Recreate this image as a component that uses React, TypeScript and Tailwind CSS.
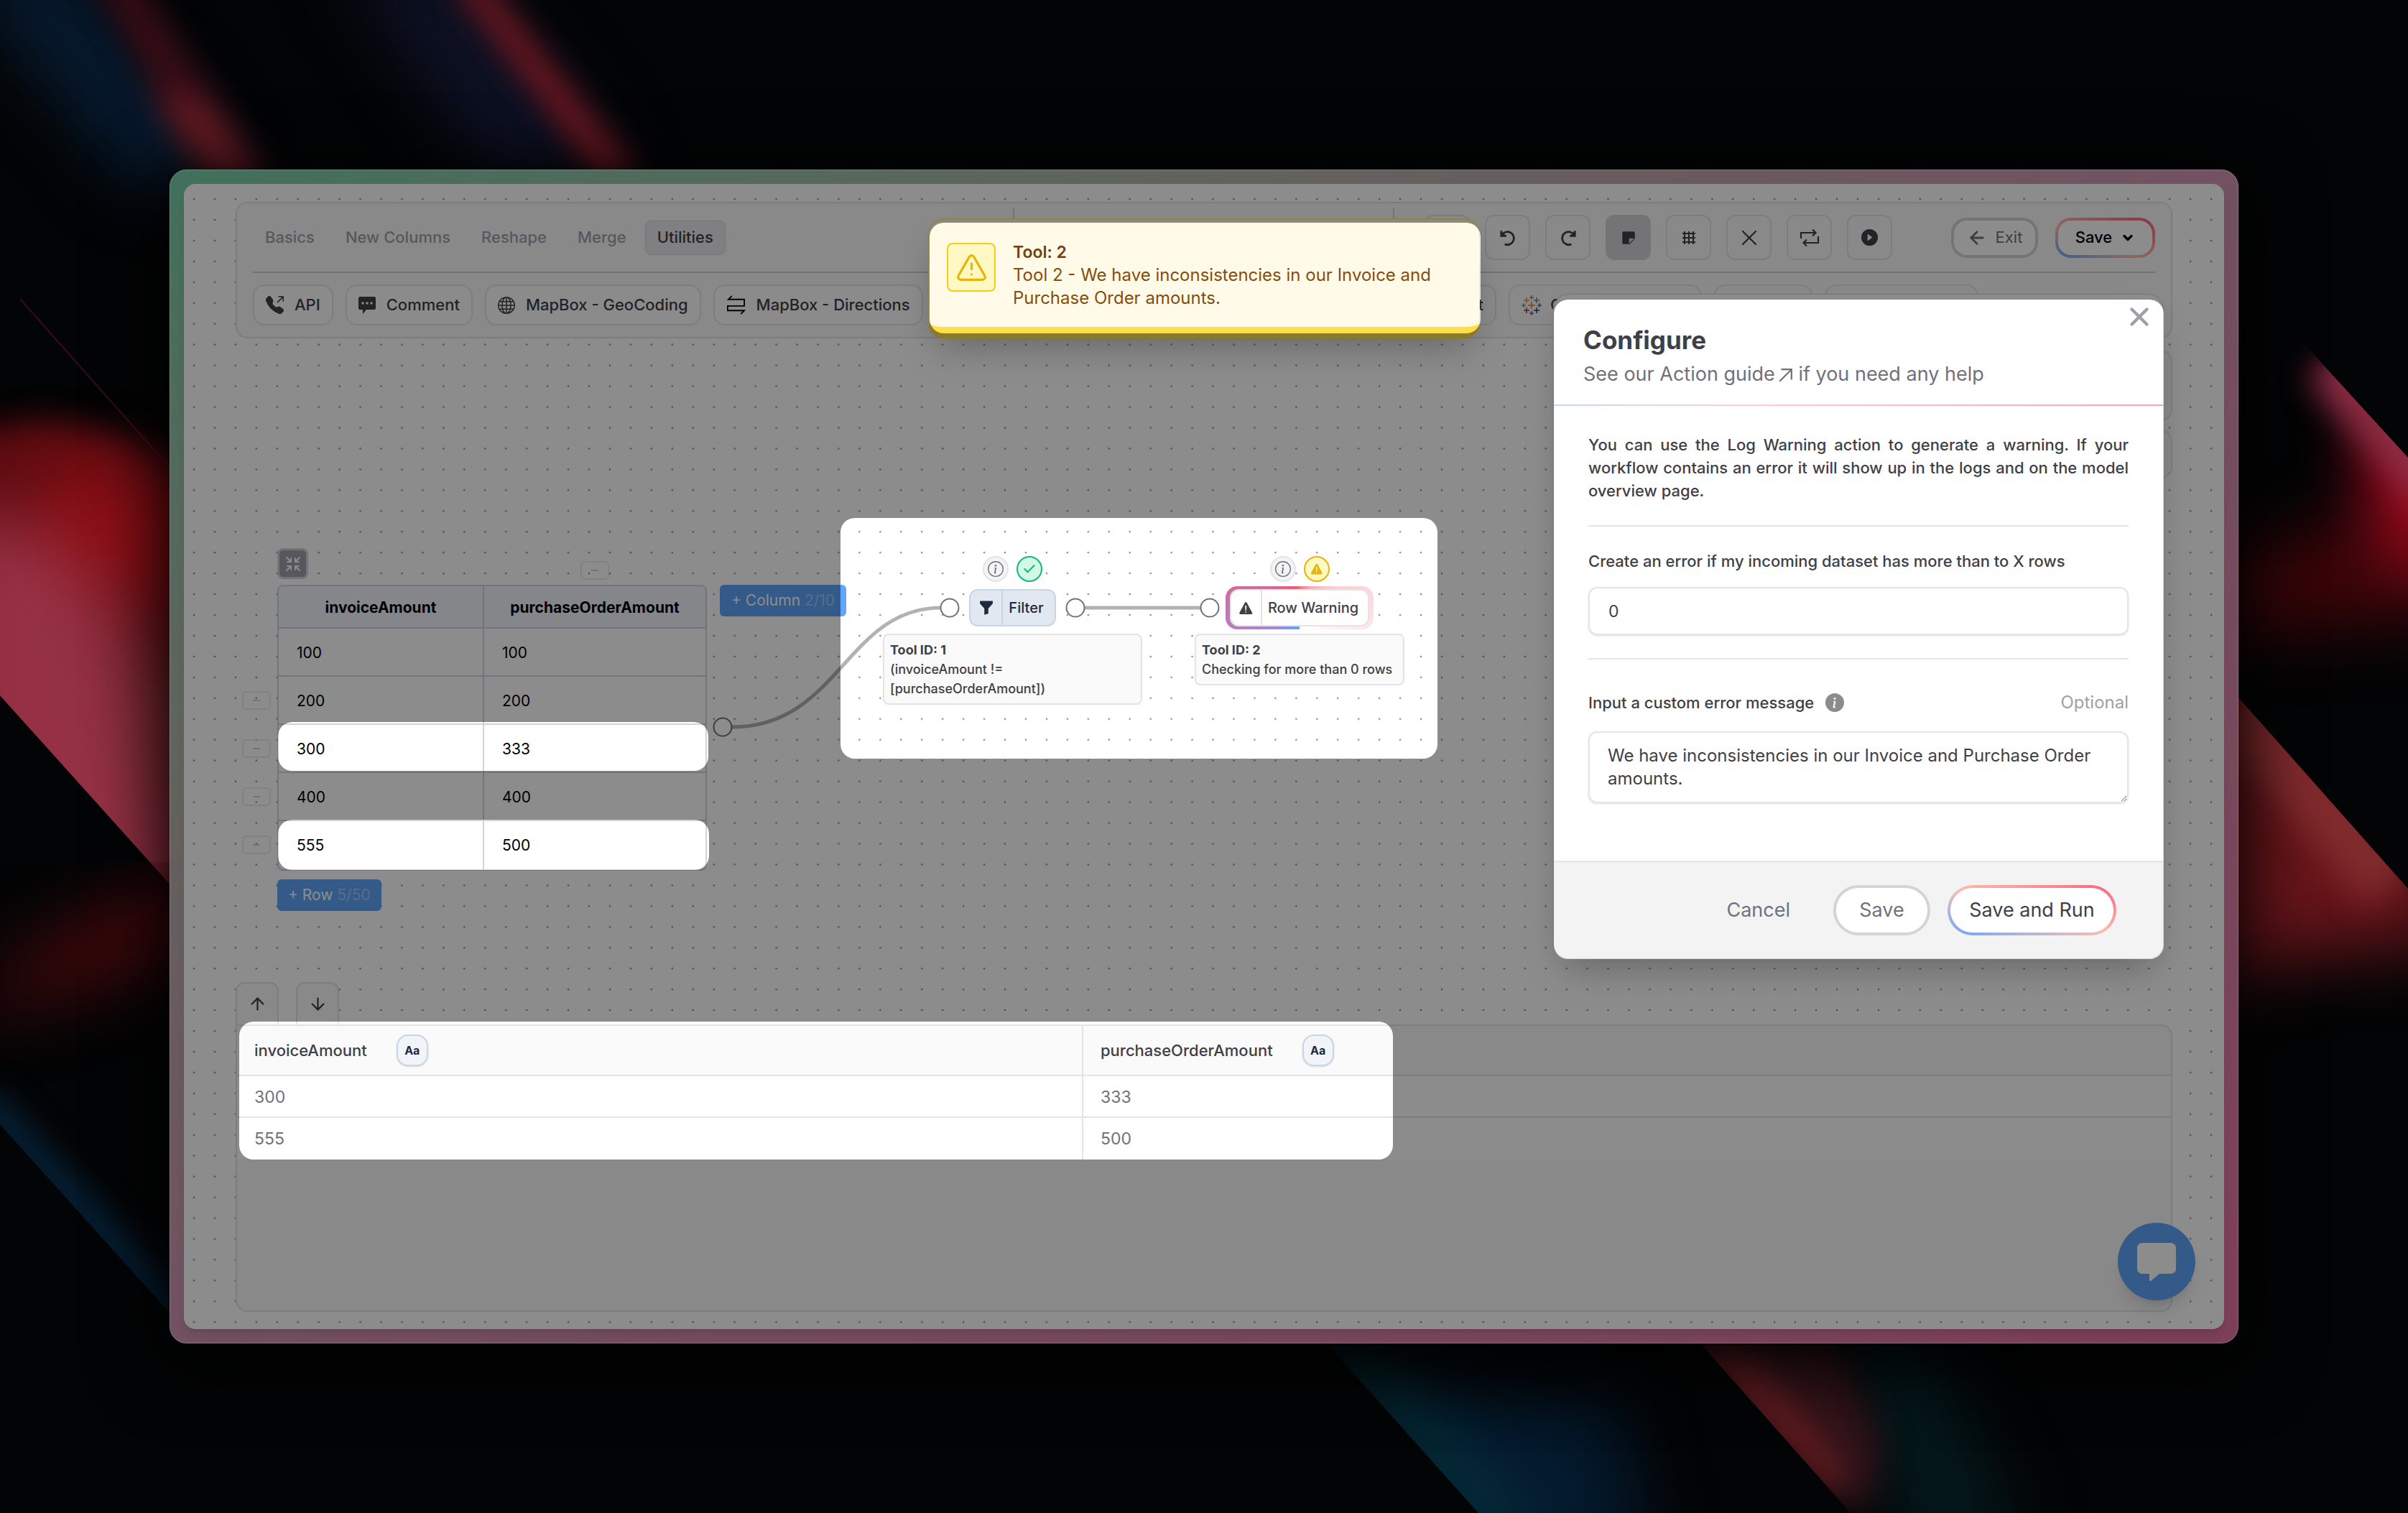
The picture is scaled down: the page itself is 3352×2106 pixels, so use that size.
import { ReactNode } from 'react'
import { ArrowDown, ArrowLeft, ArrowUp, Check, ChevronDown, Shrink, TriangleAlert, X } from 'lucide-react'
import { BsFunnelFill, BsGlobe, BsInfoCircle, BsInfoCircleFill, BsPlayCircleFill, BsStickyFill, BsTelephoneOutboundFill } from 'react-icons/bs'
import { IoWarning } from 'react-icons/io5'

const tabs = ['Basics', 'New Columns', 'Reshape', 'Merge', 'Utilities']

const inputRows = [
  ['100', '100'],
  ['200', '200'],
  ['300', '333'],
  ['400', '400'],
  ['555', '500'],
]

const resultRows = [
  ['300', '333'],
  ['555', '500'],
]

// areas left bright by the dimming layer, measured from the window's corner
const spotlights = [
  { x: 1058, y: 74, w: 767, h: 154 },
  { x: 1927, y: 181, w: 849, h: 918 },
  { x: 151, y: 769, w: 599, h: 68 },
  { x: 151, y: 905, w: 600, h: 70 },
  { x: 934, y: 485, w: 831, h: 335 },
  { x: 97, y: 1186, w: 1606, h: 192 },
]

function Backdrop() {
  return (
    <svg className="absolute inset-0 h-full w-full" viewBox="0 0 3352 2106" preserveAspectRatio="xMidYMid slice" aria-hidden="true">
      <defs>
        <filter id="blur20" x="-80%" y="-80%" width="260%" height="260%" colorInterpolationFilters="sRGB"><feGaussianBlur stdDeviation="22" /></filter>
        <filter id="blur45" x="-80%" y="-80%" width="260%" height="260%" colorInterpolationFilters="sRGB"><feGaussianBlur stdDeviation="48" /></filter>
        <clipPath id="leftMass"><path d="M0 400H260V1257L0 968Z" /></clipPath>
        <clipPath id="leftLow"><path d="M0 1200H260V1854L0 1565Z" /></clipPath>
        <clipPath id="rightTop"><path d="M3100 361L3352 637V1000H3100Z" /></clipPath>
        <clipPath id="rightMid"><path d="M3100 953L3352 1237V1600H3100Z" /></clipPath>
        <clipPath id="bottomA"><path d="M1847 1870L2058 2106H2600V1870Z" /></clipPath>
        <clipPath id="bottomB"><path d="M2367 1870L2576 2106H3100V1870Z" /></clipPath>
      </defs>
      <rect width="3352" height="2106" fill="#030405" />

      {/* top left streaks */}
      <g filter="url(#blur45)">
        <path d="M-60 -40L90 -60L330 250L190 260Z" fill="#081c33" />
        <path d="M470 -60L640 -60L870 250L690 250Z" fill="#0e1226" />
      </g>
      <g filter="url(#blur20)">
        <path d="M130 -40L180 -40L370 250L290 250Z" fill="#3d0c14" />
        <path d="M210 130L290 140L380 260L290 250Z" fill="#641a22" />
        <path d="M620 -40L670 -30L890 250L840 250Z" fill="#7d1922" />
      </g>
      <path d="M28 416L240 655" stroke="#360c1a" strokeWidth="2" />

      {/* left glow */}
      <g clipPath="url(#leftMass)">
        <g filter="url(#blur20)">
          <path d="M-60 600L60 585L170 610L290 680V1320H-60Z" fill="#5a0b10" />
        </g>
        <g filter="url(#blur45)">
          <path d="M60 640L290 680V880L60 760Z" fill="#900f15" />
          <path d="M-80 700L60 740L300 980V1400H-80Z" fill="#963145" />
          <path d="M140 860L330 960V1220L200 1080Z" fill="#7c2a32" />
        </g>
      </g>
      <g clipPath="url(#leftLow)">
        <path d="M-60 1420L60 1310L300 1200V1320L60 1390Z" fill="#4a090c" filter="url(#blur45)" />
        <path d="M-30 1530L260 1850" stroke="#062238" strokeWidth="50" filter="url(#blur20)" />
      </g>

      {/* right glow */}
      <g clipPath="url(#rightTop)">
        <g filter="url(#blur45)">
          <path d="M3060 790L3380 700V860L3060 880Z" fill="#400508" />
          <path d="M3290 560L3420 560V840L3310 740Z" fill="#b00a20" />
        </g>
        <path d="M3240 500L3400 680" stroke="#8c2c44" strokeWidth="80" filter="url(#blur20)" />
      </g>
      <g clipPath="url(#rightMid)">
        <g filter="url(#blur45)">
          <path d="M3000 900H3180L3420 1240V1310L3200 1330L3000 1400Z" fill="#68151a" />
        </g>
        <path d="M3110 980L3330 1230" stroke="#802b2d" strokeWidth="90" filter="url(#blur20)" />
      </g>

      {/* bottom beams */}
      <g clipPath="url(#bottomA)">
        <g filter="url(#blur45)">
          <path d="M1840 1860L1980 1930L2250 1960L2300 2180H2060Z" fill="#041a2e" />
          <path d="M1810 1830L1880 1850L2160 2180L2040 2180Z" fill="#053440" />
        </g>
      </g>
      <g clipPath="url(#bottomB)">
        <path d="M2540 1830H2660L2820 2160H2660Z" fill="#051a1e" filter="url(#blur45)" />
        <g filter="url(#blur20)">
          <path d="M2330 1850H2550L2620 2010L2600 2110Z" fill="#301318" />
          <path d="M2340 1870H2430L2560 2040L2560 2100Z" fill="#641c21" />
        </g>
      </g>
    </svg>
  )
}

function Dots() {
  return (
    <svg className="absolute inset-0 h-full w-full" aria-hidden="true">
      <pattern id="dots" x="0" y="7" width="28.95" height="28.95" patternUnits="userSpaceOnUse">
        <circle cx="14" cy="14" r="1.3" fill="#8a8a90" />
      </pattern>
      <rect width="100%" height="100%" fill="url(#dots)" />
    </svg>
  )
}

function CommentIcon() {
  return (
    <svg width="24" height="26" viewBox="0 0 24 26">
      <path d="M2 1h20a2 2 0 0 1 2 2v14a2 2 0 0 1-2 2H11l-5 6v-6H2a2 2 0 0 1-2-2V3a2 2 0 0 1 2-2Z" fill="currentColor" />
      <path d="M4.500 8.500h3v3h-3zM10.500 8.500h3v3h-3zM16.500 8.500h3v3h-3z" fill="#fff" />
    </svg>
  )
}

function DirectionsIcon() {
  return (
    <svg width="27" height="27" viewBox="0 0 28 28" fill="none" stroke="#000" strokeWidth="1.900">
      <path d="M8 1L3 6h23v9.500H2V22h24l-5 5" />
    </svg>
  )
}

function PlusBurstIcon() {
  const marks: [number, number, number, string][] = [
    [14, 14, 5, '#e8762c'],
    [7, 7, 4, '#eb912c'],
    [21, 7, 4, '#5b879b'],
    [7, 21, 4, '#c72035'],
    [21, 21, 4, '#1f447e'],
    [14, 3, 3, '#7199a6'],
    [14, 25, 3, '#5b6591'],
    [3, 14, 3, '#7199a6'],
    [25, 14, 3, '#5b6591'],
  ]
  return (
    <svg width="28" height="28" viewBox="0 0 28 28" fill="none" strokeWidth="1.500">
      {marks.map(([x, y, r, color]) => (
        <path key={`${x}-${y}`} d={`M${x - r} ${y}h${r * 2}M${x} ${y - r}v${r * 2}`} stroke={color} />
      ))}
    </svg>
  )
}

function UndoIcon({ flip = false }: { flip?: boolean }) {
  return (
    <svg width="26" height="26" viewBox="0 0 24 24" fill="none" stroke="currentColor" strokeWidth="2.600" className={flip ? '-scale-x-100' : ''}>
      <path d="M3.500 3v6.500h6.500" />
      <path d="M4 9A8.300 8.300 0 1 1 8 20.200" />
      <path d="M3 3l7 7H3z" fill="currentColor" stroke="none" />
    </svg>
  )
}

function GridIcon() {
  return (
    <svg width="20" height="20" viewBox="0 0 20 20" stroke="currentColor" strokeWidth="2">
      <path d="M4 1v18M10 1v18M16 1v18M1 4h18M1 10h18M1 16h18" />
    </svg>
  )
}

function RepeatIcon() {
  return (
    <svg width="28" height="28" viewBox="0 0 28 28" fill="none" stroke="currentColor" strokeWidth="2.200">
      <path d="M2 15V7h20M18 2.500L22.500 7L18 11.500M26 12v9H6M10 16.500L5.500 21L10 25.500" />
    </svg>
  )
}

function ToolButton({ icon, label }: { icon: ReactNode; label: string }) {
  return (
    <button className="flex h-[57px] items-center gap-[15px] rounded-2xl border-2 border-zinc-200 bg-white/50 px-4 text-[22px] font-medium whitespace-nowrap">
      {icon}
      {label}
    </button>
  )
}

function Toolbar() {
  const actions = [
    { name: 'Undo', icon: <UndoIcon /> },
    { name: 'Redo', icon: <UndoIcon flip /> },
    { name: 'Notes', icon: <BsStickyFill size={20} />, active: true },
    { name: 'Grid', icon: <GridIcon /> },
    { name: 'Clear', icon: <X size={36} strokeWidth={1.5} /> },
    { name: 'Swap', icon: <RepeatIcon /> },
    { name: 'Run', icon: <BsPlayCircleFill size={23} /> },
  ]
  return (
    <header className="relative rounded-2xl border-2 border-zinc-200 bg-neutral-50 px-[22px] text-zinc-700">
      <div className="flex h-[95px] items-center">
        <nav className="flex gap-[9px]">
          {tabs.map((tab) => (
            <button
              key={tab}
              className={
                tab === 'Utilities'
                  ? 'h-12 rounded-lg border border-zinc-300 bg-[#e9e9ee] px-4 text-[22px] font-medium text-zinc-700'
                  : 'h-12 border border-transparent px-4 text-[22px] font-medium text-zinc-400'
              }
            >
              {tab}
            </button>
          ))}
        </nav>
        <div className="my-[5px] ml-auto h-[84px] w-[531px] border-x-2 border-zinc-300" />
        <div className="ml-[42px] flex gap-[21px]">
          <span className="h-[63px] w-[63px] rounded-xl border-2 border-zinc-200" />
          {actions.map((action) => (
            <button
              key={action.name}
              aria-label={action.name}
              className={
                action.active
                  ? 'flex h-[63px] w-[63px] items-center justify-center rounded-xl border-2 border-zinc-300 bg-zinc-300'
                  : 'flex h-[63px] w-[63px] items-center justify-center rounded-xl border-2 border-zinc-200'
              }
            >
              {action.icon}
            </button>
          ))}
        </div>
        <button className="ml-[82px] flex h-14 w-[121px] items-center justify-center gap-3 rounded-[22px] border-4 border-zinc-300 bg-white text-[22px] text-zinc-500">
          <ArrowLeft size={28} strokeWidth={2.5} />
          Exit
        </button>
        <div className="ml-6 rounded-[22px] bg-linear-to-tr from-[#60a5fa] via-[#fdbcae] via-40% to-[#fb5a7b] p-1">
          <button className="flex h-12 w-[131px] items-center justify-center gap-3 rounded-[18px] bg-white text-[22px] font-medium text-black">
            Save
            <ChevronDown size={20} strokeWidth={4} />
          </button>
        </div>
      </div>
      <div className="h-[2px] bg-[#cfcfd3]" />
      <div className="flex gap-[17px] py-4">
        <ToolButton icon={<BsTelephoneOutboundFill size={25} />} label="API" />
        <ToolButton icon={<CommentIcon />} label="Comment" />
        <ToolButton icon={<BsGlobe size={24} />} label="MapBox - GeoCoding" />
        <ToolButton icon={<DirectionsIcon />} label="MapBox - Directions" />
        <button className="h-[57px] flex-1 rounded-2xl border-2 border-zinc-200 px-4 text-right text-[22px] font-medium">t</button>
        <button className="flex h-[57px] w-[269px] items-center gap-3 rounded-2xl border-2 border-zinc-200 px-4 text-[22px] font-medium">
          <PlusBurstIcon />
          C
        </button>
        <span className="h-[57px] w-[137px] rounded-2xl border-2 border-zinc-200" />
        <span className="mr-[246px] h-[57px] w-[214px] rounded-2xl border-2 border-zinc-200" />
      </div>
    </header>
  )
}

function StatusBadges({ ok }: { ok?: boolean }) {
  return (
    <div className="flex gap-[11px]">
      <span className="flex h-9 w-9 items-center justify-center rounded-full border-2 border-zinc-200 bg-zinc-100 text-zinc-500">
        <BsInfoCircle size={22} />
      </span>
      {ok ? (
        <span className="flex h-9 w-9 items-center justify-center rounded-full border-2 border-[#10b981] bg-[#d1fae5] text-[#10b981]">
          <Check size={20} strokeWidth={2.5} />
        </span>
      ) : (
        <span className="flex h-9 w-9 items-center justify-center rounded-full border-2 border-[#eab308] bg-[#fef9c3] text-[#eab308]">
          <IoWarning size={20} />
        </span>
      )}
    </div>
  )
}

function InputTable() {
  return (
    <>
      <button aria-label="Collapse" className="absolute top-[292px] left-[58px] flex h-[43px] w-[43px] items-center justify-center rounded-lg border-[3px] border-zinc-300 bg-zinc-400 text-white">
        <Shrink size={24} strokeWidth={2} />
      </button>
      <button aria-label="Remove column" className="absolute top-[310px] left-[480px] flex h-[26px] w-10 items-center justify-center rounded-md border-2 border-zinc-200/70">
        <span className="h-[2px] w-[10px] bg-zinc-300" />
      </button>
      <div className="absolute top-[491px] left-[9px] flex flex-col gap-[41px]">
        {inputRows.slice(1).map((row) => (
          <button key={row[0]} aria-label={`Remove row ${row[0]}`} className="flex h-[26px] w-10 items-center justify-center rounded-md border-2 border-zinc-200/70">
            <span className="h-[2px] w-[10px] bg-zinc-300" />
          </button>
        ))}
      </div>
      <div className="absolute top-[343px] left-[58px] w-[598px] overflow-hidden rounded-lg border-2 border-[#d2d3dc] bg-white text-[21px] text-black">
        <table className="w-full border-separate border-spacing-0">
          <thead>
            <tr className="h-[59px] bg-slate-100">
              <th className="w-[286px] border-r-2 border-b-2 border-[#d2d3dc] pt-[2px] font-bold">invoiceAmount</th>
              <th className="border-b-2 border-[#d2d3dc] pt-[2px] font-bold">purchaseOrderAmount</th>
            </tr>
          </thead>
          <tbody>
            {inputRows.map((row, i) => (
              <tr key={row[0]} className="h-[67px]">
                <td className={i < 4 ? 'border-r-2 border-b-2 border-[#d2d3dc] pt-[2px] pl-[25px]' : 'border-r-2 border-[#d2d3dc] pl-[25px]'}>{row[0]}</td>
                <td className={i < 4 ? 'border-b-2 border-[#d2d3dc] pt-[2px] pl-[25px]' : 'pl-[25px]'}>{row[1]}</td>
              </tr>
            ))}
          </tbody>
        </table>
      </div>
      <button className="absolute top-[343px] left-[674px] h-[44px] rounded-md bg-[#60a5fa] px-4 text-[21px] whitespace-nowrap text-white">
        + Column <span className="text-white/40">2/10</span>
      </button>
      <button className="absolute top-[753px] left-[58px] h-[44px] rounded-md bg-[#60a5fa] px-[15px] text-[21px] whitespace-nowrap text-white">
        + Row <span className="text-white/40">5/50</span>
      </button>
    </>
  )
}

function Flow() {
  return (
    <>
      <svg className="absolute inset-0 h-full w-full" fill="none" aria-hidden="true">
        <path d="M691 541C840 541 850 375 982 375" stroke="#b1b1b7" strokeWidth="5" />
        <path d="M1182 375H1344" stroke="#b1b1b7" strokeWidth="5" />
        <g fill="#fff" stroke="#71717a" strokeWidth="2">
          <circle cx="678" cy="541" r="12.500" />
          <circle cx="994" cy="375" r="12.500" />
          <circle cx="1169" cy="375" r="12.500" />
          <circle cx="1356" cy="375" r="12.500" />
        </g>
      </svg>

      <div className="absolute top-[303px] left-[901px] flex w-[361px] flex-col items-center text-zinc-700">
        <StatusBadges ok />
        <div className="mt-[10px] flex h-[52px] items-stretch rounded-xl border-2 border-slate-300 bg-slate-200 text-slate-800">
          <span className="flex w-[45px] items-center justify-center border-r-2 border-slate-300">
            <BsFunnelFill size={22} />
          </span>
          <span className="flex items-center pr-[15px] pl-2 text-[20px] font-medium">Filter</span>
        </div>
        <div className="mt-[10px] w-full rounded-lg border-2 border-zinc-200 bg-neutral-50 px-2 py-[7px] text-[18px] leading-[27px] font-medium">
          <p className="font-bold">Tool ID: 1</p>
          <p>(invoiceAmount != [purchaseOrderAmount])</p>
        </div>
      </div>

      <div className="absolute top-[303px] left-[1335px] flex w-[292px] flex-col items-center text-zinc-700">
        <StatusBadges />
        <div className="relative mt-[10px]">
          <span className="absolute -inset-x-[6px] -inset-y-1 rounded-2xl bg-[conic-gradient(from_180deg,#60a5fa,#b47fc0_20%,#d06ca6_29%,#fb5271_47%,#fda4af_57%,#fecdd3_67%,#ffe4e6_78%,transparent_92%)]" />
          <div className="relative flex h-[52px] items-stretch rounded-xl border-2 border-zinc-200 bg-white">
            <span className="flex w-[43px] items-center justify-center border-r-2 border-zinc-200">
              <IoWarning size={23} />
            </span>
            <span className="flex items-center pr-[13px] pl-2 text-[20px] font-medium">Row Warning</span>
          </div>
        </div>
        <div className="mt-[10px] w-full rounded-lg border-2 border-zinc-200 bg-neutral-50 px-2 py-[7px] text-[18px] leading-[27px] font-medium">
          <p className="font-bold">Tool ID: 2</p>
          <p>Checking for more than 0 rows</p>
        </div>
      </div>
    </>
  )
}

function Results() {
  const header = (name: string) => (
    <div className="flex items-center gap-[41px]">
      {name}
      <span className="flex h-11 w-11 items-center justify-center rounded-2xl border-2 border-slate-300 bg-slate-100 text-[16px] font-bold text-slate-800 shadow-sm">Aa</span>
    </div>
  )
  return (
    <section className="relative">
      <div className="flex gap-6 text-zinc-700">
        <button aria-label="Move up" className="flex h-[59px] w-[60px] items-center justify-center rounded-t-xl border-2 border-b-0 border-zinc-200 bg-neutral-50">
          <ArrowUp size={27} strokeWidth={2} />
        </button>
        <button aria-label="Move down" className="flex h-[59px] w-[60px] items-center justify-center rounded-t-xl border-2 border-b-0 border-zinc-200 bg-neutral-50">
          <ArrowDown size={27} strokeWidth={2} />
        </button>
      </div>
      <div className="h-[400px] overflow-hidden rounded-2xl rounded-tl-none border-2 border-zinc-200 bg-neutral-50">
        <table className="w-full border-separate border-spacing-0 text-left">
          <thead>
            <tr className="h-[70px] text-[22px] text-zinc-700">
              <th className="w-[1178px] border-r-2 border-b-2 border-zinc-200 pl-6 font-medium">{header('invoiceAmount')}</th>
              <th className="border-b-2 border-zinc-200 pl-6 font-medium">{header('purchaseOrderAmount')}</th>
            </tr>
          </thead>
          <tbody>
            {resultRows.map((row, i) => (
              <tr key={row[0]} className="h-[58px] bg-white text-[23px] text-zinc-500">
                <td className={i === 0 ? 'border-r-2 border-b-2 border-zinc-200 pt-[2px] pl-6' : 'border-r-2 border-zinc-200 pl-6'}>{row[0]}</td>
                <td className={i === 0 ? 'border-b-2 border-zinc-200 pt-[2px] pl-6' : 'pl-6'}>{row[1]}</td>
              </tr>
            ))}
          </tbody>
        </table>
      </div>
    </section>
  )
}

function ConfigureDialog() {
  return (
    <section role="dialog" aria-label="Configure" className="absolute top-[153px] right-[84px] w-[850px] overflow-hidden rounded-[22px] border border-zinc-300 bg-white text-zinc-700 shadow-2xl">
      <button aria-label="Close" className="absolute top-[10px] right-[12px] text-zinc-400">
        <X size={42} strokeWidth={2.5} />
      </button>
      <div className="px-[41px] pt-[43px] pb-[26px]">
        <h2 className="text-[35px] leading-10 font-bold">Configure</h2>
        <p className="mt-3 text-[27px] leading-8 text-zinc-500">
          See our{' '}
          <a href="#guide">
            Action guide
            <svg className="ml-1 inline-block" width="21" height="21" viewBox="0 0 19 19" fill="none" stroke="currentColor" strokeWidth="2">
              <path d="M2 17L17 2M4 2h13v13" />
            </svg>
          </a>{' '}
          if you need any help
        </p>
      </div>
      <div className="h-[2px] bg-linear-to-r from-blue-200 via-rose-200 via-30% to-rose-300" />
      <div className="px-12 pt-[38px] pb-20 text-[22px] leading-8 font-medium">
        <p className="text-justify">
          You can use the Log Warning action to generate a warning. If your workflow contains an error it will show up in the logs and on the model overview page.
        </p>
        <hr className="my-8 border-t-2 border-zinc-200" />
        <label htmlFor="rows">Create an error if my incoming dataset has more than to X rows</label>
        <input id="rows" defaultValue="0" className="mt-5 block h-[67px] w-full rounded-xl border-2 border-zinc-200 px-[26px] text-[23px] font-normal shadow-sm" />
        <hr className="my-8 border-t-2 border-zinc-200" />
        <div className="flex items-center pt-3">
          <label htmlFor="message">Input a custom error message</label>
          <BsInfoCircleFill size={26} className="ml-4 text-[#8c8c8c]" />
          <span className="ml-auto text-[24px] font-normal text-zinc-400">Optional</span>
        </div>
        <textarea
          id="message"
          defaultValue="We have inconsistencies in our Invoice and Purchase Order amounts."
          className="mt-6 block h-[100px] w-full rounded-xl border-2 border-zinc-200 px-[25px] pt-4 text-[24px] leading-8 font-normal shadow-sm"
        />
      </div>
      <footer className="flex justify-end gap-6 border-t-2 border-zinc-200 bg-[#f3f3f4] py-8 pr-[65px] text-[27px]">
        <button className="h-[70px] px-9 text-zinc-500">Cancel</button>
        <button className="h-[70px] w-[135px] rounded-full border-4 border-zinc-300 bg-white text-zinc-500">Save</button>
        <div className="rounded-full bg-linear-to-tr from-[#60a5fa] via-[#fdbcae] to-[#fb5a7b] p-1">
          <button className="h-[62px] w-[227px] rounded-full bg-white">Save and Run</button>
        </div>
      </footer>
    </section>
  )
}

function Toast() {
  return (
    <div role="alert" className="absolute top-12 left-1/2 flex h-[167px] w-[768px] -translate-x-1/2 gap-6 overflow-hidden rounded-[22px] border-x border-t-2 border-b-[16px] border-x-yellow-200 border-t-yellow-200 border-b-[#fde047] bg-[#fffbe8] pt-8 pl-[25px] text-[24px] leading-8 text-[#854d0e] shadow-2xl">
      <span className="flex h-[68px] w-[68px] shrink-0 items-center justify-center rounded-lg border-2 border-[#facc15] bg-[#fef9c3] text-[#eab308]">
        <TriangleAlert size={45} strokeWidth={1.75} />
      </span>
      <div className="-mt-[3px]">
        <p className="text-[23px] font-semibold text-[#713f12]">Tool: 2</p>
        <p className="w-[620px]">Tool 2 - We have inconsistencies in our Invoice and Purchase Order amounts.</p>
      </div>
    </div>
  )
}

function Dimmer() {
  return (
    <svg className="pointer-events-none absolute inset-0 h-full w-full" aria-hidden="true">
      <mask id="holes">
        <rect width="100%" height="100%" fill="#fff" />
        {spotlights.map((s) => (
          <rect key={`${s.x}-${s.y}`} x={s.x} y={s.y} width={s.w} height={s.h} rx="20" fill="#000" />
        ))}
      </mask>
      <rect width="100%" height="100%" fill="#000" fillOpacity="0.45" mask="url(#holes)" />
    </svg>
  )
}

export default function App() {
  return (
    <main className="relative flex min-h-screen overflow-hidden bg-black p-[236px] font-['Inter',sans-serif]">
      <Backdrop />
      <div className="relative flex flex-1 overflow-hidden rounded-[24px] bg-[linear-gradient(to_bottom_right,#78cca9,#b0b6aa_24%,#d194b0_50%,#e4749f)] p-5 shadow-[0_20px_100px_10px_#000]">
        <div className="relative flex flex-1 flex-col overflow-hidden rounded-2xl bg-white px-18 pt-[25px] pb-6 shadow-lg">
          <Dots />
          <Toolbar />
          <div className="relative flex-1">
            <div className="absolute top-4 right-0 h-[99px] w-[820px] rounded-2xl border-2 border-zinc-200 bg-neutral-50" />
            <div className="absolute top-[127px] right-0 h-[68px] w-[820px] rounded-2xl border-2 border-zinc-200 bg-neutral-50" />
            <InputTable />
            <Flow />
          </div>
          <Results />
          <button aria-label="Open chat" className="absolute right-10 bottom-10 flex h-[108px] w-[108px] items-center justify-center rounded-full bg-[#60a5fa] text-white shadow-xl">
            <svg width="54" height="54" viewBox="0 0 54 54" fill="currentColor">
              <path d="M7 1h40a7 7 0 0 1 7 7v29a7 7 0 0 1-7 7H31L19 54c-1 .6-2 .2-2-1v-9H7a7 7 0 0 1-7-7V8a7 7 0 0 1 7-7Z" />
            </svg>
          </button>
          <ConfigureDialog />
          <Toast />
        </div>
        <Dimmer />
        <div className="pointer-events-none absolute inset-0 rounded-[24px] border border-white/20" />
      </div>
    </main>
  )
}
